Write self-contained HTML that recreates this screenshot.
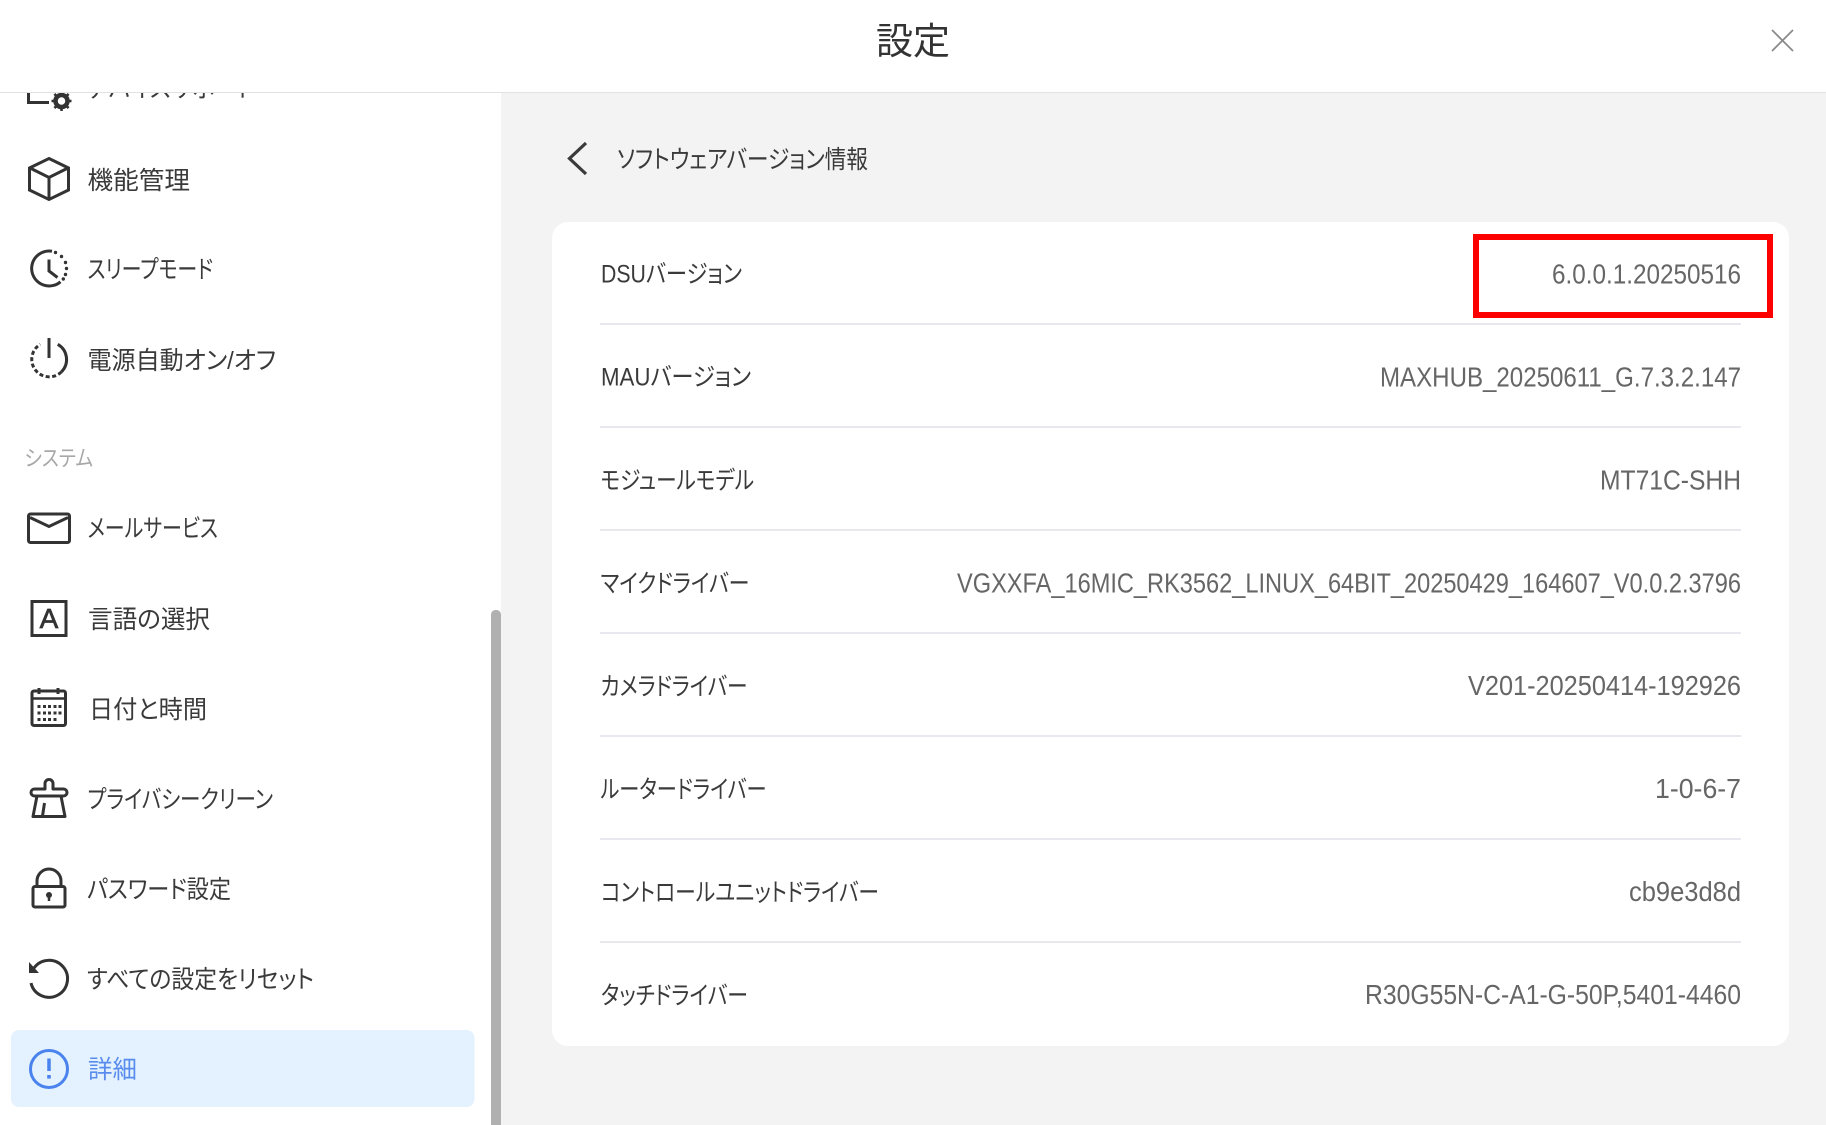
<!DOCTYPE html>
<html lang="ja">
<head>
<meta charset="utf-8">
<title>設定</title>
<style>
html,body{margin:0;padding:0;width:1826px;height:1125px;overflow:hidden;background:#fff}
svg{display:block}
text{font-family:"Liberation Sans","Noto Sans CJK JP",sans-serif;font-feature-settings:"palt";}
.m{font-size:25px;fill:#3a3a3a}
.l{font-size:25px;fill:#3a3a3a}
.v{font-size:27.5px;fill:#666}
.i{fill:none;stroke:#333;stroke-width:3}
</style>
</head>
<body>
<svg width="1826" height="1125" viewBox="0 0 1826 1125" xmlns="http://www.w3.org/2000/svg">
<rect width="1826" height="1125" fill="#fff"/>
<rect x="501" y="0" width="1325" height="1125" fill="#f3f3f3"/>
<rect x="491" y="610" width="10" height="530" rx="4.500" fill="#b0b0b0"/>

<!-- sidebar -->
<rect x="11" y="1030" width="463.500" height="77" rx="8" fill="#e3f2fe"/>

<text class="m" x="87" y="97" textLength="168" lengthAdjust="spacingAndGlyphs">デバイスサポート</text>
<path class="i" d="M28.500 90V102.500H49"/>
<circle cx="61.500" cy="101" r="6" fill="none" stroke="#333" stroke-width="4.500"/>
<path d="M61.500 91V94M61.500 108V111M51.500 101H54.500M68.500 101H71.500M54.400 93.900L56.500 96M66.500 106L68.600 108.100M54.400 108.100L56.500 106M66.500 96L68.600 93.900" stroke="#333" stroke-width="2.600" fill="none"/>

<text class="m" x="87.500" y="189" textLength="102.500" lengthAdjust="spacingAndGlyphs">機能管理</text>
<path class="i" d="M49 158.500L68.500 168V190L49 199.500L29.500 190V168Z"/>
<path class="i" d="M30 168L49 177.500L68 168M49 177.500V198"/>

<text class="m" x="87.500" y="278" textLength="125.500" lengthAdjust="spacingAndGlyphs">スリープモード</text>
<path class="i" d="M52 251.200A17.500 17.500 0 1 0 60.500 281.800"/>
<circle cx="55.500" cy="252.500" r="1.700" fill="#333"/><circle cx="61.500" cy="256.500" r="1.700" fill="#333"/><circle cx="65.500" cy="262.500" r="1.700" fill="#333"/><circle cx="66.500" cy="268.500" r="1.700" fill="#333"/><circle cx="65.500" cy="274.500" r="1.700" fill="#333"/><circle cx="63.300" cy="279" r="1.700" fill="#333"/>
<path class="i" d="M49 259.500V271L57.500 277.500"/>

<text class="m" x="87.500" y="369" textLength="188.500" lengthAdjust="spacingAndGlyphs">電源自動オン/オフ</text>
<path class="i" d="M49 338V358"/>
<path class="i" d="M57.750 344.300A17.500 17.500 0 0 1 61.400 371.900"/>
<path class="i" stroke-dasharray="4 2.500" d="M61.400 371.900A17.500 17.500 0 1 1 40.250 344.300"/>

<text x="24.500" y="466" font-size="22" fill="#a8a8a8" textLength="68.500" lengthAdjust="spacingAndGlyphs">システム</text>

<text class="m" x="87.500" y="537" textLength="130.500" lengthAdjust="spacingAndGlyphs">メールサービス</text>
<rect class="i" x="28.500" y="514" width="41" height="28.500" rx="2"/>
<path class="i" d="M30 517.500L49 526.500L68 517.500"/>

<text class="m" x="88" y="628" textLength="122" lengthAdjust="spacingAndGlyphs">言語の選択</text>
<rect class="i" x="32" y="601.500" width="34" height="34"/>
<text x="49" y="628" font-size="28" fill="#333" text-anchor="middle" style="stroke:#333;stroke-width:.7">A</text>

<text class="m" x="89" y="718" textLength="118" lengthAdjust="spacingAndGlyphs">日付と時間</text>
<rect class="i" x="32" y="691" width="33.500" height="34.500" rx="2"/>
<path d="M33 698.500H65" stroke="#333" stroke-width="2.500"/>
<path d="M39 688V694M58 688V694" stroke="#333" stroke-width="3"/>
<g fill="#333">
<rect x="37.500" y="705" width="3" height="3"/><rect x="43" y="705" width="3" height="3"/><rect x="48" y="705" width="3" height="3"/><rect x="53.500" y="705" width="3" height="3"/><rect x="58.500" y="705" width="3" height="3"/>
<rect x="37.500" y="711.500" width="3" height="3"/><rect x="43" y="711.500" width="3" height="3"/><rect x="48" y="711.500" width="3" height="3"/><rect x="53.500" y="711.500" width="3" height="3"/><rect x="58.500" y="711.500" width="3" height="3"/>
<rect x="37.500" y="718" width="3" height="3"/><rect x="43" y="718" width="3" height="3"/><rect x="48" y="718" width="3" height="3"/><rect x="53.500" y="718" width="3" height="3"/>
</g>

<text class="m" x="87.500" y="808" textLength="185.500" lengthAdjust="spacingAndGlyphs">プライバシークリーン</text>
<path class="i" stroke-linejoin="round" d="M45 789V783.500A4 4 0 0 1 53 783.500V789H63.500A3.500 3.500 0 0 1 63.500 796H34.500A3.500 3.500 0 0 1 34.500 789Z"/>
<path class="i" stroke-linejoin="round" d="M37 796L33 816.500H65L61 796"/>
<path class="i" d="M44.500 803L42.500 816"/>

<text class="m" x="87" y="898" textLength="144" lengthAdjust="spacingAndGlyphs">パスワード設定</text>
<rect class="i" x="33" y="886.500" width="32" height="20.500" rx="2"/>
<path class="i" d="M37 886V881A12 12 0 0 1 61 881V886"/>
<circle cx="49" cy="895" r="3" fill="#333"/><path d="M49 895V901" stroke="#333" stroke-width="2.500"/>

<text class="m" x="87" y="988" textLength="227" lengthAdjust="spacingAndGlyphs">すべての設定をリセット</text>
<path class="i" d="M34 968A18.500 18.500 0 1 1 31 983"/>
<path d="M29 962L39 973H29Z" fill="#333"/>

<text x="88" y="1078" font-size="25" fill="#5a8cee" textLength="49" lengthAdjust="spacingAndGlyphs">詳細</text>
<circle cx="49" cy="1069" r="18.500" fill="none" stroke="#4a82ee" stroke-width="3"/>
<path d="M49 1058.500V1071" stroke="#4a82ee" stroke-width="3.500"/><rect x="47.200" y="1075" width="3.600" height="3.600" fill="#4a82ee"/>

<!-- header -->
<rect x="0" y="0" width="1826" height="92" fill="#fff"/>
<rect x="0" y="92" width="1826" height="1" fill="#e2e2e2"/>
<text x="876" y="54" font-size="37" fill="#333" textLength="74" lengthAdjust="spacingAndGlyphs">設定</text>
<path d="M1772 30L1793 51M1793 30L1772 51" stroke="#8a8a8a" stroke-width="1.800" fill="none"/>

<!-- sub header -->
<path d="M586 143L569.500 158.500L586 174" fill="none" stroke="#3a3a3a" stroke-width="3.200"/>
<text x="617" y="168" font-size="25" fill="#3a3a3a" textLength="251" lengthAdjust="spacingAndGlyphs">ソフトウェアバージョン情報</text>

<!-- card -->
<rect x="552" y="222" width="1237" height="824" rx="16" fill="#fff"/>
<g fill="#e8e8ee">
<rect x="600" y="323" width="1141" height="2"/>
<rect x="600" y="426" width="1141" height="2"/>
<rect x="600" y="529" width="1141" height="2"/>
<rect x="600" y="632" width="1141" height="2"/>
<rect x="600" y="735" width="1141" height="2"/>
<rect x="600" y="838" width="1141" height="2"/>
<rect x="600" y="941" width="1141" height="2"/>
</g>

<text class="l" x="601" y="282.500" textLength="141" lengthAdjust="spacingAndGlyphs">DSUバージョン</text>
<text class="v" x="1552" y="283.500" textLength="189" lengthAdjust="spacingAndGlyphs">6.0.0.1.20250516</text>

<text class="l" x="601" y="385.500" textLength="150" lengthAdjust="spacingAndGlyphs">MAUバージョン</text>
<text class="v" x="1380" y="386.500" textLength="361" lengthAdjust="spacingAndGlyphs">MAXHUB_20250611_G.7.3.2.147</text>

<text class="l" x="600.500" y="489" textLength="153.500" lengthAdjust="spacingAndGlyphs">モジュールモデル</text>
<text class="v" x="1600" y="489.400" textLength="141" lengthAdjust="spacingAndGlyphs">MT71C-SHH</text>

<text class="l" x="600.500" y="592" textLength="149" lengthAdjust="spacingAndGlyphs">マイクドライバー</text>
<text class="v" x="957" y="592.300" textLength="784" lengthAdjust="spacingAndGlyphs">VGXXFA_16MIC_RK3562_LINUX_64BIT_20250429_164607_V0.0.2.3796</text>

<text class="l" x="600.500" y="695" textLength="147" lengthAdjust="spacingAndGlyphs">カメラドライバー</text>
<text class="v" x="1468" y="695.200" textLength="273" lengthAdjust="spacingAndGlyphs">V201-20250414-192926</text>

<text class="l" x="600.500" y="798" textLength="166" lengthAdjust="spacingAndGlyphs">ルータードライバー</text>
<text class="v" x="1655" y="798.100" textLength="86" lengthAdjust="spacingAndGlyphs">1-0-6-7</text>

<text class="l" x="601" y="901" textLength="278" lengthAdjust="spacingAndGlyphs">コントロールユニットドライバー</text>
<text class="v" x="1629" y="901" textLength="112" lengthAdjust="spacingAndGlyphs">cb9e3d8d</text>

<text class="l" x="601" y="1004" textLength="147" lengthAdjust="spacingAndGlyphs">タッチドライバー</text>
<text class="v" x="1365" y="1004" textLength="376" lengthAdjust="spacingAndGlyphs">R30G55N-C-A1-G-50P,5401-4460</text>

<!-- red box -->
<rect x="1476" y="237" width="294" height="78" fill="none" stroke="#f00" stroke-width="6"/>
</svg>
</body>
</html>
